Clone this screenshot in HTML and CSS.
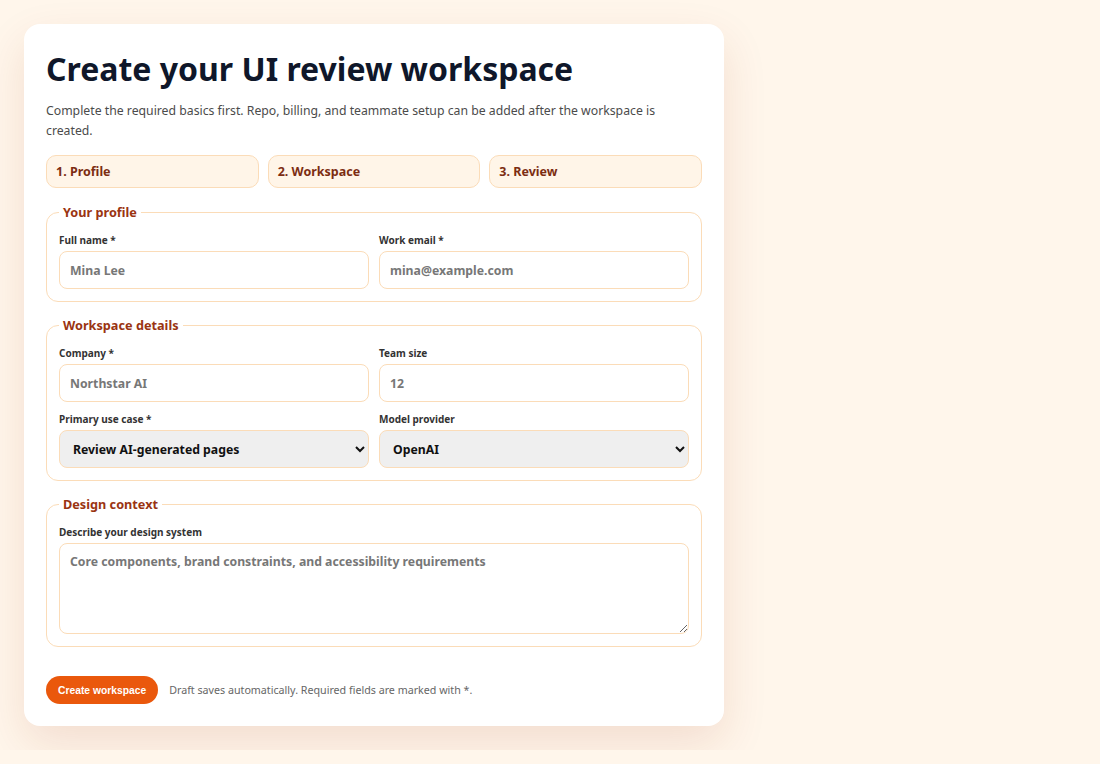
FILE: index.html
```html
<!DOCTYPE html>
<html lang="en">
<head>
    <meta charset="UTF-8">
    <meta name="viewport" content="width=device-width, initial-scale=1.0">
    <title>Create your UI review workspace</title>
    <link rel="stylesheet" href="styles.css">
</head>
<body>
    <main class="card">
        <h1>Create your UI review workspace</h1>
        <p class="intro">Complete the required basics first. Repo, billing, and teammate setup can be added after the workspace is created.</p>

        <ol class="steps">
            <li class="step">1. Profile</li>
            <li class="step">2. Workspace</li>
            <li class="step">3. Review</li>
        </ol>

        <fieldset class="group">
            <legend>Your profile</legend>
            <div class="row">
                <label class="field">
                    <span class="label">Full name *</span>
                    <input type="text" placeholder="Mina Lee">
                </label>
                <label class="field">
                    <span class="label">Work email *</span>
                    <input type="email" placeholder="mina@example.com">
                </label>
            </div>
        </fieldset>

        <fieldset class="group">
            <legend>Workspace details</legend>
            <div class="row">
                <label class="field">
                    <span class="label">Company *</span>
                    <input type="text" placeholder="Northstar AI">
                </label>
                <label class="field">
                    <span class="label">Team size</span>
                    <input type="text" placeholder="12">
                </label>
            </div>
            <div class="row">
                <label class="field">
                    <span class="label">Primary use case *</span>
                    <select>
                        <option>Review AI-generated pages</option>
                        <option>Audit a design system</option>
                    </select>
                </label>
                <label class="field">
                    <span class="label">Model provider</span>
                    <select>
                        <option>OpenAI</option>
                        <option>Anthropic</option>
                    </select>
                </label>
            </div>
        </fieldset>

        <fieldset class="group">
            <legend>Design context</legend>
            <label class="field">
                <span class="label">Describe your design system</span>
                <textarea placeholder="Core components, brand constraints, and accessibility requirements"></textarea>
            </label>
        </fieldset>

        <div class="actions">
            <button type="button" class="primary">Create workspace</button>
            <span class="hint">Draft saves automatically. Required fields are marked with *.</span>
        </div>
    </main>
</body>
</html>
```

FILE: styles.css
```css
* {
    box-sizing: border-box;
}
body {
    margin: 0;
    padding: 24px;
    background-color: #fff6eb;
    font-family: "Noto Sans", sans-serif;
    color: #0f172a;
}
.card {
    width: 700px;
    padding: 24px 22px 22px;
    background-color: #fff;
    border-radius: 16px;
    box-shadow: 0 18px 45px rgba(154, 52, 18, 0.12);
    display: flex;
    flex-direction: column;
    gap: 14px;
}
h1 {
    margin: 0;
    font-size: 32px;
    line-height: 41px;
    font-weight: 700;
    color: #0f172a;
}
.intro {
    margin: -2px 0 0;
    font-size: 12.25px;
    line-height: 19.5px;
    color: #4b4b4b;
}
.steps {
    list-style: none;
    margin: 1px 0 0;
    padding: 0;
    display: grid;
    grid-template-columns: repeat(3, 1fr);
    gap: 9px;
}
.step {
    height: 33px;
    padding: 0 9px;
    display: flex;
    align-items: center;
    background-color: #fff5e8;
    border: 1px solid #fbdcb8;
    border-radius: 10px;
    font-size: 12.5px;
    font-weight: 700;
    color: #7c2d12;
}
.group {
    margin: 0;
    padding: 12px 12px 12px;
    border: 1px solid #fbdcb8;
    border-radius: 12px;
    display: flex;
    flex-direction: column;
    gap: 10px;
}
.steps + .group {
    margin-top: 1px;
}
.group legend {
    padding: 0 4px;
    font-size: 12.7px;
    line-height: 18px;
    font-weight: 700;
    color: #9a3412;
}
.row {
    display: grid;
    grid-template-columns: 1fr 1fr;
    gap: 10px;
}
.field {
    display: flex;
    flex-direction: column;
    gap: 4px;
}
.label {
    font-size: 10px;
    line-height: 14px;
    font-weight: 700;
    color: #333;
}
input,
select,
textarea {
    width: 100%;
    font-family: "Noto Sans", sans-serif;
    font-size: 12.25px;
    font-weight: 700;
    color: #111;
    border: 1px solid #fbdcb8;
    border-radius: 8px;
    background-color: #fff;
}
input {
    height: 38px;
    padding: 0 10px;
}
select {
    height: 38px;
    padding: 0 6px 0 9px;
    background-color: #efefef;
}
textarea {
    height: 91px;
    padding: 9px 10px;
    resize: vertical;
}
input::placeholder,
textarea::placeholder {
    color: #777;
}
.actions {
    margin-top: 15px;
    display: flex;
    align-items: center;
    gap: 11px;
}
.primary {
    height: 28px;
    padding: 0 12px;
    border: none;
    border-radius: 14px;
    background-color: #ea580c;
    color: #fff;
    font-family: "Liberation Sans", Arial, sans-serif;
    font-size: 10.3px;
    font-weight: 700;
    cursor: pointer;
}
.hint {
    font-size: 10.7px;
    color: #666;
}
```
